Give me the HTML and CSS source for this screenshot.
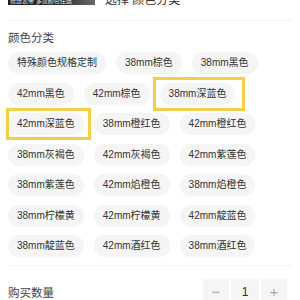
FILE: index.html
```html
<!DOCTYPE html>
<html lang="zh">
<head>
<meta charset="utf-8">
<link rel="stylesheet" href="styles.css">
</head>
<body>
<div class="sheet">
  <div class="product">
    <div class="thumb"><span class="thumb-cap">赠送表带 多款颜色任选</span></div>
    <div class="chosen">选择 颜色分类</div>
  </div>
  <div class="section">
    <div class="label">颜色分类</div>
    <div class="options">
      <span class="pill">特殊颜色规格定制</span>
      <span class="pill">38mm棕色</span>
      <span class="pill">38mm黑色</span>
      <span class="pill">42mm黑色</span>
      <span class="pill">42mm棕色</span>
      <span class="pill mark mark-a">38mm深蓝色</span>
      <span class="pill mark mark-b">42mm深蓝色</span>
      <span class="pill">38mm橙红色</span>
      <span class="pill">42mm橙红色</span>
      <span class="pill">38mm灰褐色</span>
      <span class="pill">42mm灰褐色</span>
      <span class="pill">42mm紫莲色</span>
      <span class="pill">38mm紫莲色</span>
      <span class="pill">42mm焰橙色</span>
      <span class="pill">38mm焰橙色</span>
      <span class="pill">38mm柠檬黄</span>
      <span class="pill">42mm柠檬黄</span>
      <span class="pill">42mm靛蓝色</span>
      <span class="pill">38mm靛蓝色</span>
      <span class="pill">42mm酒红色</span>
      <span class="pill">38mm酒红色</span>
    </div>
  </div>
  <div class="qty-row">
    <div class="qty-label">购买数量</div>
    <div class="stepper">
      <span class="step step-btn">−</span>
      <span class="step step-num">1</span>
      <span class="step step-btn">+</span>
    </div>
  </div>
</div>
</body>
</html>
```

FILE: styles.css
```css
html, body {
  margin: 0;
  padding: 0;
  background: #ffffff;
  overflow: hidden;
}
body {
  font-family: "Liberation Sans", "Noto Sans CJK SC", sans-serif;
  color: #333333;
}
.sheet {
  padding: 0 8px;
}
.product {
  display: flex;
  align-items: flex-end;
  gap: 10px;
  margin-top: -40px;
  padding-bottom: 15px;
  border-bottom: 1px solid #f3f3f3;
}
.thumb {
  width: 87px;
  height: 45px;
  background: linear-gradient(90deg, #1a1a1a 0%, #2c2c2c 60%, #6a6a6a 100%);
  display: flex;
  align-items: flex-end;
  overflow: hidden;
}
.thumb-cap {
  color: #e8e8e8;
  font-size: 6px;
  line-height: 8px;
  padding: 0 0 0 2px;
  white-space: nowrap;
}
.chosen {
  font-size: 12px;
  line-height: 14px;
  margin-bottom: -2px;
  color: #333333;
}
.section {
  padding-top: 9px;
  padding-bottom: 8px;
  border-bottom: 1px solid #f3f3f3;
}
.label {
  font-size: 11.5px;
  line-height: 16px;
  color: #444444;
}
.options {
  margin-top: 6px;
  display: flex;
  flex-wrap: wrap;
  gap: 8.5px 10px;
  padding-right: 30px;
}
.pill {
  position: relative;
  height: 22px;
  line-height: 22px;
  padding: 0 9px;
  border-radius: 11px;
  background: #f5f5f5;
  font-size: 10px;
  color: #333333;
  white-space: nowrap;
}
.mark::after {
  content: "";
  position: absolute;
  border: 3px solid #f4cf4b;
  pointer-events: none;
}
.mark-a::after {
  left: -7px;
  right: -10px;
  top: -6px;
  bottom: -6px;
}
.mark-b::after {
  left: -2px;
  right: -7px;
  top: -5px;
  bottom: -5px;
}
.qty-row {
  margin-top: 13px;
  display: flex;
  justify-content: space-between;
  align-items: center;
}
.qty-label {
  font-size: 11.5px;
  color: #444444;
}
.stepper {
  display: flex;
  gap: 2px;
  margin-right: 5px;
}
.step {
  height: 26px;
  line-height: 26px;
  text-align: center;
  background: #f5f5f5;
}
.step-btn {
  width: 26px;
  font-size: 15px;
  color: #a8a8a8;
}
.step-num {
  width: 28px;
  font-size: 12px;
  color: #333333;
}
```
